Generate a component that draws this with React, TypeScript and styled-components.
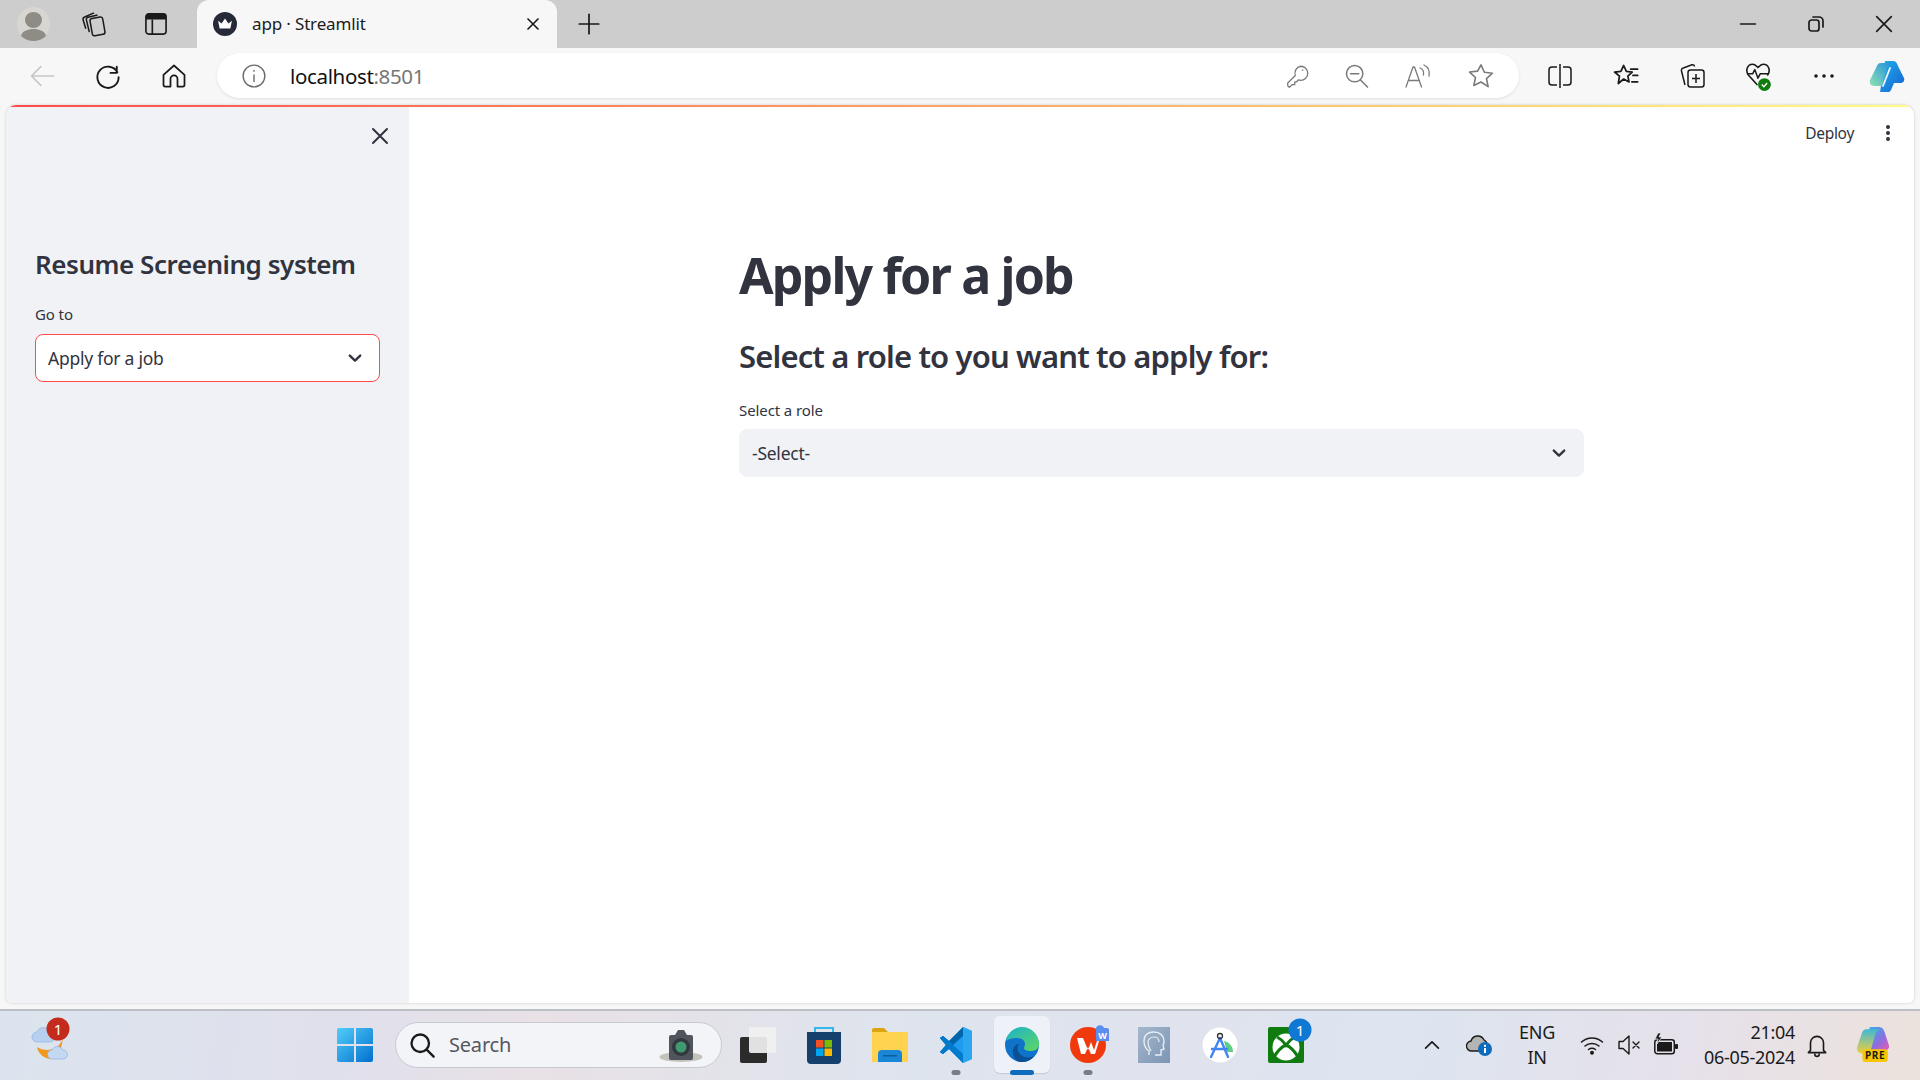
import React from 'react';
import styled, { createGlobalStyle } from 'styled-components';

const GlobalStyle = createGlobalStyle`
  html, body {
    margin: 0;
    padding: 0;
    height: 100%;
    overflow: hidden;
    background: #f7f7f7;
    font-family: "Noto Sans", "Open Sans", sans-serif;
  }
  * { box-sizing: border-box; }
`;

const Shell = styled.div`
  width: 1920px;
  height: 1080px;
  display: flex;
  flex-direction: column;
`;

/* browser chrome */
const TabStrip = styled.div`
  height: 48px;
  background: #cdcdcd;
  display: flex;
  align-items: center;
  flex-shrink: 0;
`;

const StripButton = styled.div<{ w: number }>`
  width: ${(p) => p.w}px;
  height: 48px;
  display: flex;
  align-items: center;
  justify-content: center;
  flex-shrink: 0;
`;

const ActiveTab = styled.div`
  width: 360px;
  height: 48px;
  margin-left: 7px;
  background: #f7f7f7;
  border-radius: 12px 12px 0 0;
  display: flex;
  align-items: center;
  padding: 0 14px 0 16px;
  flex-shrink: 0;
`;

const TabTitle = styled.span`
  flex: 1;
  margin: 0 0 2px 15px;
  font-size: 17px;
  letter-spacing: -0.15px;
  color: #1c1c1c;
`;

const WindowControls = styled.div`
  margin-left: auto;
  display: flex;
  align-items: center;
  padding-right: 2px;
`;

const Toolbar = styled.div`
  height: 57px;
  background: #f7f7f7;
  display: flex;
  align-items: center;
  padding: 0 0 2px 9px;
  flex-shrink: 0;
`;

const NavButton = styled.div<{ w: number }>`
  width: ${(p) => p.w}px;
  height: 44px;
  display: flex;
  align-items: center;
  justify-content: center;
  flex-shrink: 0;
`;

const AddressBar = styled.div`
  width: 1302px;
  height: 45px;
  margin: 0 8px 0 10px;
  background: #ffffff;
  border-radius: 23px;
  box-shadow: 0 1px 3px rgba(0, 0, 0, 0.1);
  display: flex;
  align-items: center;
  padding: 0 24px 0 24px;
  flex-shrink: 0;
`;

const Url = styled.div`
  flex: 1;
  margin-left: 23px;
  font-size: 20.5px;
  letter-spacing: -0.35px;
  color: #111111;
  span { color: #767676; }
`;

const AddressIcons = styled.div`
  display: flex;
  align-items: center;
  gap: 32px;
`;

/* streamlit page */
const PageFrame = styled.div`
  flex: 1;
  margin: 0 6px 0 6px;
  position: relative;
  display: flex;
  background: #ffffff;
  border-radius: 10px 10px 6px 6px;
  overflow: hidden;
  box-shadow: 0 0 3px rgba(0, 0, 0, 0.18);
  min-height: 0;
`;

const RainbowLine = styled.div`
  position: absolute;
  top: 0;
  left: 0;
  right: 0;
  height: 2px;
  background: linear-gradient(90deg, #ff4b4b, #fffd80);
`;

const Sidebar = styled.aside`
  width: 403px;
  background: #f0f2f6;
  display: flex;
  flex-direction: column;
  padding: 0 29px;
  flex-shrink: 0;
`;

const SidebarClose = styled.div`
  height: 60px;
  display: flex;
  align-items: flex-end;
  justify-content: flex-end;
  margin-right: -12px;
  padding-bottom: 17px;
`;

const SidebarTitle = styled.h2`
  margin: 81px 0 0;
  font-size: 26px;
  line-height: 36px;
  font-weight: 600;
  letter-spacing: -0.45px;
  color: #31333f;
`;

const FieldLabel = styled.label<{ top: number }>`
  display: block;
  margin-top: ${(p) => p.top}px;
  font-size: 15px;
  line-height: 20px;
  letter-spacing: -0.1px;
  color: #31333f;
`;

const SelectBox = styled.div<{ focused?: boolean; gap: number }>`
  height: 48px;
  margin-top: ${(p) => p.gap}px;
  border-radius: 8px;
  background: ${(p) => (p.focused ? '#ffffff' : '#f0f2f6')};
  border: 1px solid ${(p) => (p.focused ? '#ff4b4b' : '#f0f2f6')};
  display: flex;
  align-items: center;
  justify-content: space-between;
  padding: 0 16px 0 12px;
  font-size: 17.5px;
  letter-spacing: -0.25px;
  color: #31333f;
`;

const Main = styled.main`
  flex: 1;
  min-width: 0;
  display: flex;
  flex-direction: column;
`;

const AppHeader = styled.div`
  height: 56px;
  display: flex;
  align-items: center;
  justify-content: flex-end;
  gap: 24px;
  padding: 0 16px 0 0;
  flex-shrink: 0;
`;

const DeployText = styled.span`
  font-size: 15.5px;
  letter-spacing: -0.3px;
  color: #31333f;
`;

const Block = styled.div`
  width: 845px;
  margin-left: 330px;
  display: flex;
  flex-direction: column;
`;

const PageTitle = styled.h1`
  margin: 79px 0 0;
  font-size: 50px;
  line-height: 70px;
  font-weight: 700;
  letter-spacing: -1.8px;
  color: #31333f;
`;

const SectionTitle = styled.h3`
  margin: 24px 0 0;
  font-size: 31px;
  line-height: 44px;
  font-weight: 600;
  letter-spacing: -0.86px;
  color: #31333f;
`;

/* taskbar */
const Taskbar = styled.footer`
  height: 71px;
  margin-top: 6px;
  padding-bottom: 2px;
  flex-shrink: 0;
  border-top: 2px solid #bcbfc6;
  background: linear-gradient(100deg, #dbe4ee 0%, #e0e0ec 18%, #e8e1e6 28%, #dee4ee 48%, #e0e3ee 62%, #dce5f0 72%, #e6e1ea 88%, #ece2dc 100%);
  display: flex;
  align-items: center;
  position: relative;
`;

const WeatherSlot = styled.div`
  width: 322px;
  height: 100%;
  padding: 6px 0 0 31px;
  display: flex;
  align-items: flex-start;
  flex-shrink: 0;
`;

const Slot = styled.div`
  width: 66px;
  height: 66px;
  position: relative;
  display: flex;
  align-items: center;
  justify-content: center;
  flex-shrink: 0;
  border-radius: 6px;
`;

const ActivePlate = styled.div`
  width: 56px;
  height: 57px;
  border-radius: 6px;
  background: #eef2f8;
  box-shadow: 0 1px 1px rgba(0, 0, 0, 0.12);
  display: flex;
  align-items: center;
  justify-content: center;
`;

const RunDot = styled.div<{ active?: boolean }>`
  position: absolute;
  bottom: 3px;
  left: 50%;
  transform: translateX(-50%);
  width: ${(p) => (p.active ? 24 : 9)}px;
  height: 5px;
  border-radius: 3px;
  background: ${(p) => (p.active ? '#0f6cbd' : '#7b7d84')};
`;

const SearchPill = styled.div`
  width: 327px;
  height: 46px;
  margin: 0 3px 0 7px;
  border-radius: 23px;
  background: #f3f4f8;
  border: 1px solid #c8cad2;
  display: flex;
  align-items: center;
  padding: 0 18px 0 12px;
  flex-shrink: 0;
`;

const SearchText = styled.span`
  flex: 1;
  margin-left: 13px;
  font-size: 20px;
  letter-spacing: -0.2px;
  color: #55585e;
`;

const Tray = styled.div`
  margin-left: auto;
  display: flex;
  align-items: center;
  height: 100%;
  padding-right: 13px;
`;

const TrayItem = styled.div<{ w: number }>`
  width: ${(p) => p.w}px;
  display: flex;
  align-items: center;
  justify-content: center;
  flex-shrink: 0;
`;

const TrayText = styled.div<{ align: string }>`
  width: 100%;
  font-size: 18px;
  line-height: 25px;
  letter-spacing: -0.3px;
  color: #1b1b1b;
  white-space: nowrap;
  text-align: ${(p) => p.align};
`;

const Line = ({ d, w = 24, sw = 1.5, c = '#1a1a1a' }: { d: string; w?: number; sw?: number; c?: string }) => (
  <svg width={w} height={w} viewBox="0 0 24 24" fill="none" stroke={c} strokeWidth={sw} strokeLinecap="round" strokeLinejoin="round">
    <path d={d} />
  </svg>
);

const ChevronDown = ({ c = '#31333f' }: { c?: string }) => (
  <svg width="16" height="16" viewBox="0 0 16 16" fill="none" stroke={c} strokeWidth="2.4" strokeLinecap="round" strokeLinejoin="round">
    <path d="M2.800 5.600 8 10.600l5.200-5" />
  </svg>
);

const Profile = () => (
  <svg width="33" height="34" viewBox="0 0 33 34">
    <ellipse cx="16.500" cy="17" rx="16.500" ry="17" fill="#d8d6d0" />
    <ellipse cx="16.500" cy="13" rx="8.500" ry="8" fill="#8f8c86" />
    <path d="M4 29c1-5 7-7 12.500-7S28 24 29 29c-3 3-8 5-12.500 5S7 32 4 29z" fill="#8f8c86" />
  </svg>
);

const StreamlitFavicon = () => (
  <svg width="24" height="24" viewBox="0 0 26 26">
    <circle cx="13" cy="13" r="13" fill="#262a38" />
    <path d="M5.500 9.500 9.300 12.500 13 7l3.700 5.500 3.800-3-1.700 8.500H7.200z" fill="#fff" />
  </svg>
);

const Copilot = () => (
  <svg width="36" height="32" viewBox="0 0 36 32">
    <defs>
      <linearGradient id="cop1" x1="0" y1="0" x2="1" y2="1">
        <stop offset="0" stopColor="#1bb3e8" />
        <stop offset="1" stopColor="#1a5fd6" />
      </linearGradient>
      <linearGradient id="cop2" x1="0" y1="1" x2="1" y2="0">
        <stop offset="0" stopColor="#8fe2b0" />
        <stop offset="1" stopColor="#1f8fe0" />
      </linearGradient>
    </defs>
    <path d="M16 1h8c3 0 4 2 5 5l6 12c1 3-1 5-4 5h-6l-3 7c-1 2-2 2-4 2h-7z" fill="url(#cop1)" />
    <path d="M12 3C9 3 8 5 7 8L1 20c-1 3 1 6 4 6h8l4-14c1-4 2-8 6-9z" fill="url(#cop2)" />
    <path d="M21 8 14 26" stroke="#f4f8ff" strokeWidth="1.800" strokeLinecap="round" />
  </svg>
);

const HeartCheck = () => (
  <svg width="26" height="30" viewBox="0 0 24 28">
    <path d="M11 22 3 13C0 9 2 3 7 3c2 0 3 1 5 3 2-2 3-3 5-3 5 0 7 6 4 10" fill="none" stroke="#1a1a1a" strokeWidth="1.500" strokeLinecap="round" />
    <path d="M2 12h5l2-4 3 8 2-4h8" fill="none" stroke="#1a1a1a" strokeWidth="1.400" strokeLinejoin="round" />
    <circle cx="18" cy="22" r="6" fill="#107c10" />
    <path d="m15.500 22 2 2 3-3.500" fill="none" stroke="#fff" strokeWidth="1.300" />
  </svg>
);

const Weather = () => (
  <svg width="42" height="46" viewBox="0 0 42 46">
    <path d="M6 30c1 7 8 12 14 12 5 0 7-2 9-6l3-14c-2 4-4 6-6 8-6 4-14 4-20 0z" fill="#ef9a1f" />
    <path d="M6 25a5 5 0 0 1 0-10 7 7 0 0 1 13 0 5 5 0 0 1 0 10z" fill="#b7d0ef" stroke="#8fb1de" strokeWidth="0.700" />
    <path d="M21 42a4.500 4.500 0 0 1 0-9 6 6 0 0 1 11 0 4.500 4.500 0 0 1 0 9z" fill="#c4d8f2" stroke="#8fb1de" strokeWidth="0.700" />
    <circle cx="27" cy="12" r="11.500" fill="#c42b1c" />
    <text x="27" y="17.500" textAnchor="middle" fontSize="15" fill="#fff" fontFamily="Noto Sans">1</text>
  </svg>
);

const WinLogo = () => (
  <svg width="36" height="36" viewBox="0 0 36 36">
    <defs>
      <linearGradient id="win" x1="0" y1="0" x2="1" y2="1">
        <stop offset="0" stopColor="#52cdf8" />
        <stop offset="1" stopColor="#0270cf" />
      </linearGradient>
    </defs>
    <path d="M0 3a2 2 0 0 1 2-2h15v16H0zM19 1h15a2 2 0 0 1 2 2v14H19zM0 19h17v16H2a2 2 0 0 1-2-2zM19 19h17v14a2 2 0 0 1-2 2H19z" fill="url(#win)" />
  </svg>
);

const SearchCamera = () => (
  <svg width="44" height="36" viewBox="0 0 44 36">
    <ellipse cx="22" cy="30" rx="21.500" ry="5" fill="#c4c2bc" />
    <path d="M12 8h4l3-5h6l3 5h4a2 2 0 0 1 2 2v21a2 2 0 0 1-2 2H12a2 2 0 0 1-2-2V10a2 2 0 0 1 2-2z" fill="#50555d" />
    <circle cx="22" cy="20" r="9" fill="#33383f" />
    <circle cx="22" cy="20" r="5.500" fill="#3f9a70" />
  </svg>
);

const TaskView = () => (
  <svg width="36" height="36" viewBox="0 0 36 36">
    <rect x="0" y="10" width="27" height="26" rx="2" fill="#2b2b2b" />
    <rect x="9" y="0" width="27" height="26" rx="2" fill="#f1f1f1" fillOpacity="0.92" />
  </svg>
);

const Store = () => (
  <svg width="36" height="38" viewBox="0 0 36 38">
    <path d="M9 7V2h18v5" fill="none" stroke="#35b6e8" strokeWidth="2" />
    <path d="M1 6h34v28a4 4 0 0 1-4 4H5a4 4 0 0 1-4-4z" fill="#15406e" />
    <rect x="10" y="14" width="7.500" height="7.500" fill="#f25022" />
    <rect x="18.500" y="14" width="7.500" height="7.500" fill="#7fba00" />
    <rect x="10" y="22.500" width="7.500" height="7.500" fill="#00a4ef" />
    <rect x="18.500" y="22.500" width="7.500" height="7.500" fill="#ffb900" />
  </svg>
);

const Folder = () => (
  <svg width="36" height="34" viewBox="0 0 36 34">
    <path d="M0 2a2 2 0 0 1 2-2h10l4 4h20v6H0z" fill="#dca40f" />
    <rect y="4" width="36" height="30" fill="#ffd24f" />
    <path d="M6 34v-8a4 4 0 0 1 4-4h16a4 4 0 0 1 4 4v8z" fill="#1a86d6" />
    <rect x="11" y="27" width="14" height="1.500" fill="#0b5da1" />
  </svg>
);

const VsCode = () => (
  <svg width="36" height="36" viewBox="0 0 32 36">
    <path d="M23 0 9 14 3 9 0 11l6 7-6 7 3 2 6-5 14 14 9-4V4z" fill="#1f9cf0" />
    <path d="M23 0 9 14 3 9 0 11l6 7-6 7 3 2L23 9z" fill="#0065a9" />
    <path d="M23 27 3 9 0 11l6 7-6 7 3 2 6-5 14 14z" fill="#007acc" />
    <path d="M23 0l9 4v28l-9 4z" fill="#2ba7ef" />
  </svg>
);

const Edge = () => (
  <svg width="36" height="36" viewBox="0 0 34 36">
    <defs>
      <linearGradient id="edge1" x1="0" y1="0" x2="1" y2="1">
        <stop offset="0" stopColor="#1bb0cf" />
        <stop offset="1" stopColor="#5fd85f" />
      </linearGradient>
    </defs>
    <circle cx="17" cy="18" r="17" fill="#0f74c9" />
    <path d="M1 14C3 5 10 0 17 0c10 0 17 8 17 17 0 5-4 7-8 7-4 0-7-1-7-3 0-1 1-2 1-4 0-4-4-6-8-6-4 0-9 1-11 3z" fill="url(#edge1)" />
    <path d="M14 17c-3 4-1 11 6 13 4 1 7 0 9-1-3 4-7 6-12 6-5 0-8-3-9-8-1-5 2-10 6-10z" fill="#0b4f94" />
  </svg>
);

const Wps = () => (
  <svg width="36" height="36" viewBox="0 0 36 36" overflow="visible">
    <circle cx="18" cy="18" r="18" fill="#f0390d" />
    <path d="M7 11h6l5 12 3-8 3 8 4-12h2l-5 16h-4l-3-7-3 7h-4z" fill="#fff" />
    <path d="M26 4a4 4 0 0 1 8-3h3a2 2 0 0 1 2 2v11l-13 0z" fill="#5b8def" />
    <text x="32.500" y="12" textAnchor="middle" fontSize="9" fill="#fff" fontFamily="Noto Sans" fontWeight="700">W</text>
  </svg>
);

const HeadTile = () => (
  <svg width="36" height="36" viewBox="0 0 32 36">
    <defs>
      <linearGradient id="tile" x1="0" y1="0" x2="1" y2="1">
        <stop offset="0" stopColor="#a4b7cc" />
        <stop offset="1" stopColor="#7c95b3" />
      </linearGradient>
    </defs>
    <rect width="32" height="36" fill="url(#tile)" />
    <path d="M11 28v-4c-3-2-5-6-5-10C6 8 10 5 16 5s10 4 10 9c0 2 0 3-1 4l1 4-3 1v5h-6" fill="none" stroke="#e6edf4" strokeWidth="1.400" />
    <path d="M13 24c-2-3-3-6-3-9 0-3 3-5 6-5s5 2 5 5" fill="none" stroke="#e6edf4" strokeWidth="1.200" />
  </svg>
);

const AndroidStudio = () => (
  <svg width="36" height="36" viewBox="0 0 36 36">
    <circle cx="18" cy="18" r="17.500" fill="#ffffff" />
    <path d="M22 14c5 1 9 5 9 11H25z" fill="#5fce85" />
    <path d="M18 11 9 30M18 11l8 19M10 22h15" fill="none" stroke="#4285f4" strokeWidth="2.400" strokeLinecap="round" />
    <circle cx="18" cy="9" r="2.500" fill="none" stroke="#333" strokeWidth="1.300" />
  </svg>
);

const Xbox = () => (
  <svg width="36" height="36" viewBox="0 0 36 36" overflow="visible">
    <rect x="0" y="0" width="36" height="36" rx="2" fill="#107c10" />
    <circle cx="18" cy="20" r="13.500" fill="#fff" />
    <path d="M9 10c4 2 7 5 9 8 2-3 5-6 9-8M6 30c3-5 7-10 12-12 5 2 9 7 12 12" fill="none" stroke="#107c10" strokeWidth="3" />
    <circle cx="32" cy="3" r="11.500" fill="#0f78d4" />
    <text x="32" y="8.500" textAnchor="middle" fontSize="15" fill="#fff" fontFamily="Noto Sans">1</text>
  </svg>
);

const OneDriveInfo = () => (
  <svg width="28" height="24" viewBox="0 0 28 24">
    <path d="M6 18a5 5 0 0 1-1-10 7 7 0 0 1 13-1 6 6 0 0 1 3 6l-4 5z" fill="#b4b4b4" stroke="#1a1a1a" strokeWidth="1.400" />
    <circle cx="19" cy="16" r="7" fill="#0f6cbd" />
    <rect x="18" y="15" width="2" height="5" fill="#fff" />
    <rect x="18" y="11.800" width="2" height="2" fill="#fff" />
  </svg>
);

const Wifi = () => (
  <svg width="24" height="20" viewBox="0 0 24 20" fill="none" stroke="#1a1a1a" strokeWidth="1.500" strokeLinecap="round">
    <path d="M1.500 7c6-5.500 15-5.500 21 0M5 11c4-3.500 10-3.500 14 0M8.500 14.500c2-1.500 5-1.500 7 0" />
    <circle cx="12" cy="17.800" r="1.200" fill="#1a1a1a" />
  </svg>
);

const Muted = () => (
  <svg width="24" height="22" viewBox="0 0 24 22" fill="none" stroke="#1a1a1a" strokeWidth="1.400" strokeLinejoin="round">
    <path d="M1 7.500h4L11 2v18l-6-5.500H1z" />
    <path d="m15 8 6 6m0-6-6 6" strokeLinecap="round" />
  </svg>
);

const Battery = () => (
  <svg width="26" height="26" viewBox="0 0 26 26">
    <rect x="1.800" y="7.800" width="19.500" height="14" rx="2.500" fill="none" stroke="#1a1a1a" strokeWidth="1.500" />
    <rect x="4" y="10" width="15" height="9.500" fill="#1a1a1a" />
    <rect x="22" y="12" width="3" height="5" rx="1" fill="#1a1a1a" />
    <path d="M5 1 2 7h3l-1 5 5-7H6l2-4z" fill="#1a1a1a" stroke="#e0e3ee" strokeWidth="0.800" />
  </svg>
);

const CopilotPre = () => (
  <svg width="36" height="38" viewBox="0 0 34 36">
    <defs>
      <linearGradient id="pre1" x1="0" y1="0" x2="1" y2="1">
        <stop offset="0" stopColor="#2fb6e6" />
        <stop offset="0.6" stopColor="#8a6ee0" />
        <stop offset="1" stopColor="#ee5ab0" />
      </linearGradient>
      <linearGradient id="pre2" x1="0" y1="0" x2="0" y2="1">
        <stop offset="0" stopColor="#3fb8d8" />
        <stop offset="1" stopColor="#f2cf3a" />
      </linearGradient>
    </defs>
    <path d="M14 1h8c4 0 5 2 6 5l4 12c1 3-1 5-4 5H10z" fill="url(#pre1)" />
    <path d="M11 3C8 3 7 5 6 8L2 20c-1 3 1 6 4 6h8l4-14c1-4 2-8 6-9z" fill="url(#pre2)" />
    <rect x="7" y="22" width="24" height="12" rx="3" fill="#f7c600" />
    <text x="19" y="31.500" textAnchor="middle" fontSize="9.500" fontWeight="700" fill="#1a1a1a" fontFamily="Noto Sans" letterSpacing="0.5">PRE</text>
  </svg>
);

const App = () => {
  return (
    <Shell>
      <GlobalStyle />
      <TabStrip>
        <StripButton w={66}><Profile /></StripButton>
        <StripButton w={56}>
          <svg width="28" height="28" viewBox="0 0 24 24" fill="none" stroke="#1a1a1a" strokeWidth="1.300" strokeLinejoin="round">
            <rect x="9.500" y="6.500" width="11" height="15" rx="2" transform="rotate(-10 15 14)" />
            <path d="M8 19 5.500 8.500c-.3-1.200.3-2 1.500-2.300L15 4.300M5 16 2.700 8.500C2.300 7.300 2.800 6.500 4 6L12 2.500" />
          </svg>
        </StripButton>
        <StripButton w={68}>
          <svg width="22" height="22" viewBox="0 0 24 24">
            <rect x="1" y="1" width="22" height="22" rx="3" fill="none" stroke="#1a1a1a" strokeWidth="1.800" />
            <path d="M1 4a3 3 0 0 1 3-3h16a3 3 0 0 1 3 3v3H1z" fill="#1a1a1a" />
            <path d="M8 7v16" stroke="#1a1a1a" strokeWidth="1.800" />
          </svg>
        </StripButton>
        <ActiveTab>
          <StreamlitFavicon />
          <TabTitle>app · Streamlit</TabTitle>
          <Line w={20} sw={2} d="M6 6l12 12M18 6 6 18" />
        </ActiveTab>
        <StripButton w={64}><Line w={26} sw={1.600} d="M12 3v18M3 12h18" /></StripButton>
        <WindowControls>
          <StripButton w={68}><Line w={20} sw={1.800} d="M3 12h18" /></StripButton>
          <StripButton w={68}>
            <svg width="20" height="20" viewBox="0 0 20 20" fill="none" stroke="#1a1a1a" strokeWidth="1.700">
              <rect x="3" y="6" width="10" height="11" rx="2.500" />
              <path d="M7 3h6a4 4 0 0 1 4 4v6" strokeLinecap="round" />
            </svg>
          </StripButton>
          <StripButton w={68}><Line w={22} sw={1.800} d="M4 4l16 16M20 4 4 20" /></StripButton>
        </WindowControls>
      </TabStrip>

      <Toolbar>
        <NavButton w={66}><Line c="#c6c6c6" w={28} sw={1.400} d="M3 12h19M3 12l8-8M3 12l8 8" /></NavButton>
        <NavButton w={66}><Line w={30} sw={1.500} d="M19 4.500v5h-5M19.500 9A8.500 8.500 0 1 0 20.500 13" /></NavButton>
        <NavButton w={66}><Line w={28} sw={1.500} d="M3 11 12 3l9 8v8.500a1.500 1.500 0 0 1-1.500 1.500H15v-6.500a3 3 0 0 0-6 0V21H4.500A1.500 1.500 0 0 1 3 19.500z" /></NavButton>
        <AddressBar>
          <svg width="26" height="26" viewBox="0 0 24 24" fill="none" stroke="#6c6c6c" strokeWidth="1.300">
            <circle cx="12" cy="12" r="10" />
            <path d="M12 10.500V17.500M12 6.500v1.500" />
          </svg>
          <Url>localhost<span>:8501</span></Url>
          <AddressIcons>
            <Line c="#7a7a7a" w={26} sw={1.200} d="M14.500 3a6.500 6.500 0 0 1 0 13l-2-.5-2 2H9v2.500H6.500L4 22.500 2.500 21v-2.500l7-7A6.500 6.500 0 0 1 14.500 3zM16 6.500h.5" />
            <Line c="#7a7a7a" w={28} sw={1.300} d="M10 3a7 7 0 1 1 0 14 7 7 0 0 1 0-14zM6.500 10h7M15 15.500l6 6" />
            <svg width="32" height="28" viewBox="0 0 32 28" fill="none" stroke="#7a7a7a" strokeWidth="1.300" strokeLinecap="round" strokeLinejoin="round">
              <path d="M3 25 10 5h1.500l7 20M5.500 18.500h11M17 6c3 1 4 3.500 3.500 7M21 3c4 2 6 6 5 11" />
            </svg>
            <Line c="#7a7a7a" w={28} sw={1.400} d="M12 2.500l2.900 6.300 6.900.8-5.100 4.700 1.400 6.800L12 17.100l-6.100 3 1.400-6.800-5.100-4.700 6.900-.8z" />
          </AddressIcons>
        </AddressBar>
        <NavButton w={66}>
          <svg width="26" height="26" viewBox="0 0 26 26" fill="none" stroke="#1a1a1a" strokeWidth="1.500">
            <path d="M10 4H5a3 3 0 0 0-3 3v12a3 3 0 0 0 3 3h5M16 4h5a3 3 0 0 1 3 3v12a3 3 0 0 1-3 3h-5M13 1v24" />
          </svg>
        </NavButton>
        <NavButton w={66}><Line w={28} sw={1.500} d="M10 3l2.300 5 5 .6-3.700 3.500 1 5-4.600-2.500-4.600 3.800 1-6.300L2.200 8.600l5.400-.6zM16 6h6M18 11.500h4M17 17h5" /></NavButton>
        <NavButton w={66}>
          <svg width="26" height="28" viewBox="0 0 26 28" fill="none" stroke="#1a1a1a" strokeWidth="1.500" strokeLinejoin="round">
            <rect x="9" y="8" width="16" height="17" rx="2.500" />
            <path d="M17 12v9M13 16.500h8M6 23 2.500 9c-.4-1.500.3-2.700 1.800-3L13 2.800c1.300-.3 2.200.3 2.700 1.700" />
          </svg>
        </NavButton>
        <NavButton w={66}><HeartCheck /></NavButton>
        <NavButton w={66}>
          <svg width="22" height="6" viewBox="0 0 22 6" fill="#1a1a1a">
            <circle cx="3" cy="3" r="1.800" /><circle cx="11" cy="3" r="1.800" /><circle cx="19" cy="3" r="1.800" />
          </svg>
        </NavButton>
        <NavButton w={60}><Copilot /></NavButton>
      </Toolbar>

      <PageFrame>
        <RainbowLine />
        <Sidebar>
          <SidebarClose><Line c="#31333f" w={24} sw={2} d="M5 5l14 14M19 5 5 19" /></SidebarClose>
          <SidebarTitle>Resume Screening system</SidebarTitle>
          <FieldLabel top={22}>Go to</FieldLabel>
          <SelectBox focused gap={10}>
            Apply for a job
            <ChevronDown />
          </SelectBox>
        </Sidebar>
        <Main>
          <AppHeader>
            <DeployText>Deploy</DeployText>
            <svg width="20" height="20" viewBox="0 0 20 20" fill="#31333f">
              <circle cx="10" cy="4" r="2" /><circle cx="10" cy="10" r="2" /><circle cx="10" cy="16" r="2" />
            </svg>
          </AppHeader>
          <Block>
            <PageTitle>Apply for a job</PageTitle>
            <SectionTitle>Select a role to you want to apply for:</SectionTitle>
            <FieldLabel top={22}>Select a role</FieldLabel>
            <SelectBox gap={9}>
              -Select-
              <ChevronDown />
            </SelectBox>
          </Block>
        </Main>
      </PageFrame>

      <Taskbar>
        <WeatherSlot><Weather /></WeatherSlot>
        <Slot><WinLogo /></Slot>
        <SearchPill>
          <Line w={28} sw={2} d="M10.500 3a7.500 7.500 0 1 1 0 15 7.500 7.500 0 0 1 0-15zM16 16l6 6" />
          <SearchText>Search</SearchText>
          <SearchCamera />
        </SearchPill>
        <Slot><TaskView /></Slot>
        <Slot><Store /></Slot>
        <Slot><Folder /></Slot>
        <Slot><VsCode /><RunDot /></Slot>
        <Slot><ActivePlate><Edge /></ActivePlate><RunDot active /></Slot>
        <Slot><Wps /><RunDot /></Slot>
        <Slot><HeadTile /></Slot>
        <Slot><AndroidStudio /></Slot>
        <Slot><Xbox /></Slot>
        <Tray>
          <TrayItem w={47}><Line w={22} sw={1.800} d="M5 15.500 12 8.500l7 7" /></TrayItem>
          <TrayItem w={50}><OneDriveInfo /></TrayItem>
          <TrayItem w={64}><TrayText align="center">ENG<br />IN</TrayText></TrayItem>
          <TrayItem w={46}><Wifi /></TrayItem>
          <TrayItem w={30}><Muted /></TrayItem>
          <TrayItem w={42}><Battery /></TrayItem>
          <TrayItem w={108}><TrayText align="right">21:04<br />06-05-2024</TrayText></TrayItem>
          <TrayItem w={44}><Line w={26} sw={1.500} d="M6 17V10a6 6 0 0 1 12 0v7l2 2H4zM10 20.500a2 2 0 0 0 4 0" /></TrayItem>
          <TrayItem w={68}><CopilotPre /></TrayItem>
        </Tray>
      </Taskbar>
    </Shell>
  );
};

export default App;
